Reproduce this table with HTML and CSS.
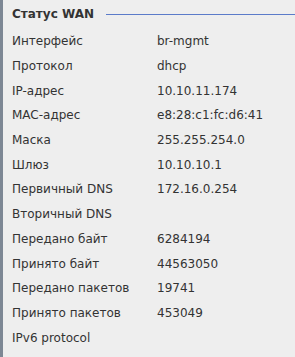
FILE: index.html
```html
<!DOCTYPE html>
<html lang="ru">
<head>
  <meta charset="UTF-8" />
  <title>Статус WAN</title>
  <link rel="stylesheet" href="styles.css">
</head>
<body>
  <div class="panel">
    <div class="panel-title">
      <span>Статус WAN</span>
      <div class="rule"></div>
    </div>
    <table class="status">
      <tr><td>Интерфейс</td><td>br-mgmt</td></tr>
      <tr><td>Протокол</td><td>dhcp</td></tr>
      <tr><td>IP-адрес</td><td>10.10.11.174</td></tr>
      <tr><td>MAC-адрес</td><td>e8:28:c1:fc:d6:41</td></tr>
      <tr><td>Маска</td><td>255.255.254.0</td></tr>
      <tr><td>Шлюз</td><td>10.10.10.1</td></tr>
      <tr><td>Первичный DNS</td><td>172.16.0.254</td></tr>
      <tr><td>Вторичный DNS</td><td></td></tr>
      <tr><td>Передано байт</td><td>6284194</td></tr>
      <tr><td>Принято байт</td><td>44563050</td></tr>
      <tr><td>Передано пакетов</td><td>19741</td></tr>
      <tr><td>Принято пакетов</td><td>453049</td></tr>
      <tr><td>IPv6 protocol</td><td></td></tr>
    </table>
  </div>
</body>
</html>
```

FILE: styles.css
```css
html, body {
  margin: 0;
  height: 100%;
}

body {
  font-family: 'DejaVu Sans', sans-serif;
  font-size: 12px;
  color: #333;
  background: #eeeeee;
}

.panel {
  min-height: 100%;
  border-left: 3px solid #7d8794;
  padding: 6px 0 0 9px;
  box-sizing: border-box;
}

.panel-title {
  display: flex;
  align-items: center;
  gap: 12px;
  font-weight: bold;
  height: 16px;
}

.panel-title .rule {
  flex: 1;
  height: 1px;
  background: #5b7bc9;
}

.status {
  border-collapse: collapse;
  margin-top: 7px;
}

.status td {
  height: 24.7px;
  padding: 0;
  vertical-align: middle;
  white-space: nowrap;
}

.status td:first-child {
  width: 145px;
}
```
